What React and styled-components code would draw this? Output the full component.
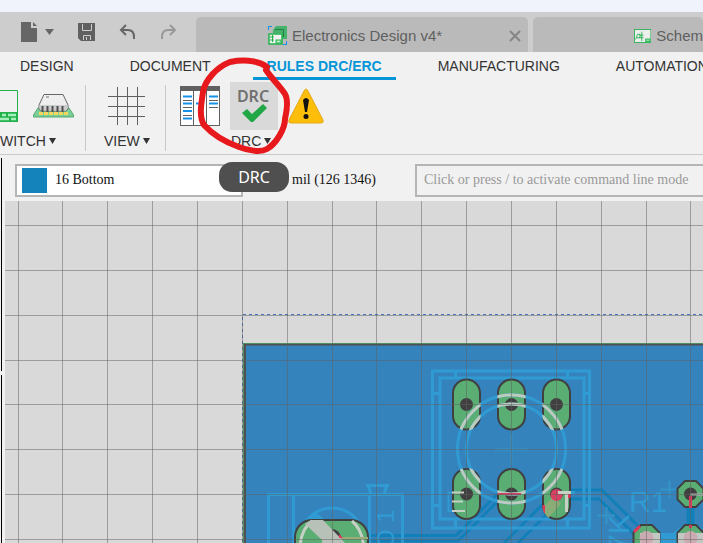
import React from "react";
import styled, { createGlobalStyle } from "styled-components";

const Global = createGlobalStyle`
  * { box-sizing: border-box; }
  body { margin: 0; overflow: hidden; background: #f1f1f1; font-family: "Liberation Sans", Arial, sans-serif; color: #333; }
  button, input, select { font: inherit; color: inherit; }
`;

const Page = styled.div`
  display: flex;
  flex-direction: column;
  height: 100vh;
  overflow: hidden;
`;

const TitleStrip = styled.div`
  flex: none;
  height: 12px;
  background: #f0f3fb;
`;

const TabBar = styled.header`
  flex: none;
  display: flex;
  align-items: flex-end;
  height: 40px;
  overflow: hidden;
  background: #cdcdcd;
`;

const QuickActions = styled.div`
  flex: none;
  display: flex;
  align-items: center;
  gap: 24px;
  width: 196px;
  height: 40px;
  padding-left: 21px;
`;

const IconButton = styled.button`
  display: flex;
  align-items: center;
  gap: 7px;
  padding: 0;
  border: 0;
  background: none;
`;

const DocTab = styled.div`
  flex: ${(p) => (p.$fill ? "1 0 0" : "none")};
  display: flex;
  align-items: center;
  width: 332px;
  min-width: 0;
  height: 35px;
  margin-right: ${(p) => (p.$fill ? 0 : 5)}px;
  padding: 2px ${(p) => (p.$fill ? 0 : 7)}px 0 ${(p) => p.$inset}px;
  border-radius: 5px 5px 0 0;
  background: #bababa;
  color: #5f5f5f;
  font-size: 15px;
  line-height: 18px;
  white-space: nowrap;
`;

const TabLabel = styled.span`
  flex: 1;
  padding-left: 5px;
`;

const Menu = styled.nav`
  flex: none;
  display: flex;
  gap: 28px;
  height: 29px;
  padding-left: 6px;
  overflow: hidden;
`;

const MenuItem = styled.a`
  flex: none;
  height: 28px;
  padding: 6px 14px 0;
  border-bottom: 3px solid ${(p) => (p.$active ? "#0696d7" : "transparent")};
  color: ${(p) => (p.$active ? "#0696d7" : "#333")};
  font-size: 14px;
  font-weight: ${(p) => (p.$active ? 700 : 400)};
  line-height: 16px;
  text-decoration: none;
`;

const Toolbar = styled.div`
  flex: none;
  display: flex;
  height: 74px;
  padding-top: 1px;
  border-bottom: 1px solid #c8c8c8;
`;

const Group = styled.section`
  position: relative;
  flex: none;
  display: flex;
  flex-direction: column;
  width: ${(p) => p.$width}px;
  height: 66px;
  margin-top: 3px;
  padding-left: ${(p) => p.$inset}px;
  border-right: ${(p) => (p.$last ? "0" : "1px solid #c8c8c8")};
`;

const Tools = styled.div`
  display: flex;
  align-items: center;
  gap: ${(p) => p.$gap}px;
  height: 48px;
  margin-top: -3px;
  padding-left: ${(p) => p.$inset || 0}px;
`;

const ToolButton = styled.button`
  flex: none;
  display: grid;
  place-items: center;
  padding: 0;
  border: 0;
  background: ${(p) => (p.$active ? "#d9d9d9" : "none")};
  height: 48px;
`;

const GroupLabel = styled.button`
  display: flex;
  align-items: center;
  gap: ${(p) => p.$gap}px;
  margin: 3px 0 0 ${(p) => p.$shift}px;
  padding: 0;
  border: 0;
  background: none;
  font-size: 14px;
  line-height: 16px;
`;

const Tooltip = styled.div`
  position: absolute;
  z-index: 3;
  top: 77px;
  left: 53px;
  width: 70px;
  border-radius: 13px;
  background: #4f4f4f;
  color: #fff;
  font-family: "Noto Sans", sans-serif;
  font-size: 16px;
  line-height: 30px;
  text-align: center;
`;

const Marker = styled.svg`
  position: absolute;
  z-index: 2;
  top: -29px;
  left: 30px;
  pointer-events: none;
`;

const Workspace = styled.main`
  flex: 1;
  display: flex;
  min-height: 0;
`;

const Rail = styled.aside`
  flex: none;
  display: flex;
  flex-direction: column;
  gap: 4px;
  width: 5px;
  padding: 3px 0 0 1px;
`;

const RailLine = styled.div`
  flex: ${(p) => (p.$fill ? "1" : "none")};
  width: 1px;
  height: 213px;
  background: #000;
`;

const Editor = styled.div`
  flex: 1;
  min-width: 0;
  display: flex;
  flex-direction: column;
`;

const CommandBar = styled.div`
  flex: none;
  display: flex;
  align-items: center;
  height: 46px;
  padding: 4px 0 0 10px;
  font-family: "Liberation Serif", serif;
  font-size: 14px;
  line-height: 16px;
  color: #111;
`;

const LayerBox = styled.label`
  flex: none;
  display: flex;
  align-items: center;
  gap: 8px;
  width: 228px;
  height: 33px;
  padding-left: 5px;
  border: 2px solid #b5b5b5;
  background: #fff;
`;

const Swatch = styled.span`
  width: 25px;
  height: 25px;
  background: #1483bb;
`;

const LayerSelect = styled.select`
  flex: 1;
  appearance: none;
  padding: 0;
  border: 0;
  background: none;
`;

const Coordinates = styled.output`
  flex: none;
  width: 172px;
  padding-left: 49px;
  white-space: nowrap;
`;

const CommandInput = styled.input`
  flex: 1;
  min-width: 0;
  height: 33px;
  padding: 0 7px;
  border: 2px solid #b5b5b5;
  border-right: 0;
  border-radius: 0;
  background: #f1f1f1;
  &::placeholder { color: #999; opacity: 1; }
`;

const Board = styled.svg`
  flex: 1;
  display: block;
  width: 100%;
  min-height: 0;
  background: #d9d9d9;
`;

const Caret = ({ color = "#333", width = 7, height = 6 }) => (
  <svg width={width} height={height} viewBox="0 0 8 6" preserveAspectRatio="none" aria-hidden="true">
    <path d="M0 0H8L4 6Z" fill={color} />
  </svg>
);

const FileIcon = () => (
  <svg width="17" height="20" viewBox="0 0 17 20">
    <path d="M0 0H10V6H16V20H0ZM12 0L16 4H12Z" fill="#666" />
  </svg>
);

const SaveIcon = () => (
  <svg width="17" height="18" viewBox="0 0 17 18">
    <path d="M0 0H17V18H3L0 15Z" fill="#606060" />
    <path d="M4.5 1V7.5H13.5V1M5.5 17V12.5H12.5V17M8.5 14V17" fill="none" stroke="#cdcdcd" />
  </svg>
);

const UndoIcon = ({ redo }) => (
  <svg width="17" height="16" viewBox="0 0 17 16">
    <g transform={redo ? "matrix(-1 0 0 1 17 0)" : undefined} fill="none" stroke={redo ? "#999" : "#666"} strokeWidth="2">
      <path d="M7 1L2 6L7 11M2 6H9Q15 6 15 13V15" />
    </g>
  </svg>
);

const CloseIcon = () => (
  <svg width="12" height="12" viewBox="0 0 12 12">
    <path d="M1 1L11 11M11 1L1 11" stroke="#858585" strokeWidth="2" />
  </svg>
);

const DesignIcon = () => (
  <svg width="19" height="19" viewBox="0 0 19 19">
    <path d="M5 4L8 0H19V13H14V7L5 7Z" fill="#45b36b" />
    <path d="M7 3.5H15.5V11" fill="none" stroke="#287e47" />
    <path d="M0 4V0H4M15 19H19V15" fill="none" stroke="#1691e8" strokeWidth="2" />
    <rect x="1" y="8" width="13" height="10" fill="#f2f2f2" stroke="#22b24c" strokeWidth="1.5" />
    <path d="M2 11H6M2 14H6M4.5 9V16" stroke="#22b24c" />
    <rect x="8" y="14" width="5" height="3" fill="#b6edc8" stroke="#22b24c" />
  </svg>
);

const SchematicIcon = () => (
  <svg width="20" height="16" viewBox="0 0 20 16">
    <rect x=".5" y=".5" width="19" height="15" fill="#eee" stroke="#22b24c" />
    <path d="M2 12L4 6H7V10H3M6 7H11M6 10H11M9 3V14" fill="none" stroke="#22b24c" />
    <rect x="13.5" y="11.5" width="5" height="3" fill="#8bdba5" stroke="#22b24c" />
  </svg>
);

const SheetIcon = () => (
  <svg width="18" height="32" viewBox="0 0 18 32">
    <path d="M0 .5H17.5V31.5H0" fill="none" stroke="#22b24c" />
    <path d="M0 22H18V32H0Z" fill="#22b24c" />
    <path d="M2 25H6M8 25H16M0 29H9M11 29H16" stroke="#a5efbd" strokeWidth="2.5" />
  </svg>
);

const ChipIcon = () => (
  <svg width="41" height="24" viewBox="0 0 41 24">
    <path d="M5 14H36L40.500 21V23H.5V21Z" fill="#79cf95" stroke="#58a971" />
    <path d="M8 18V21M13 18V21M18 18V21M23 18V21M28 18V21M33 18V21" stroke="#f8d85c" strokeWidth="4" />
    <path d="M11 .5H30L35 11V15L33 17H8L6 15V11Z" fill="#eee" stroke="#666" />
    <path d="M6.500 11H34.500V15L33 16.500H8L6.500 15Z" fill="#ccc" />
    <path d="M9.500 12V18M14.500 12V18M19.500 12V18M24.500 12V18M29.500 12V18" stroke="#505050" strokeWidth="2" />
    <path d="M13 3H16" stroke="#777" />
  </svg>
);

const GridIcon = () => (
  <svg width="38" height="38" viewBox="0 0 38 38">
    <path d="M9.500 0V38M19.500 0V38M29.500 0V38M0 9.500H37M0 19.500H37M0 29.500H37" stroke="#606060" />
  </svg>
);

const RulesIcon = () => (
  <svg width="40" height="40" viewBox="0 0 40 40">
    <rect x=".5" y=".5" width="39" height="39" fill="#fff" stroke="#606060" />
    <path d="M0 0H40V5H0ZM13 5H14V40H13ZM26 5H27V40H26Z" fill="#606060" />
    <path d="M3 10.500H12M3 17.500H12M3 25H12M3 32.500H12M16 17.500H24M29 10.500H38M29 17.500H38" stroke="#1691e8" strokeWidth="2" />
    <path d="M3 14.500H12M3 21.500H12M3 29.500H12M29 14.500H38M29 21.500H38" stroke="#606060" />
  </svg>
);

const DrcIcon = () => (
  <svg width="48" height="48" viewBox="0 0 48 48">
    <text x="23" y="20" textAnchor="middle" fontFamily="Noto Sans" fontSize="16" fontWeight="600" fill="#707070">DRC</text>
    <path d="M12 31L17 27L22 32L33 22L37 26L23 40H21Z" fill="#22a747" />
  </svg>
);

const WarningIcon = () => (
  <svg width="36" height="36" viewBox="0 0 36 36">
    <path d="M18 1Q19 1 20 3L35 32Q36 35 33 35H3Q0 35 1 32L16 3Q17 1 18 1Z" fill="#fdbd0b" stroke="#e6a817" />
    <path d="M15 12Q18 8 21 12L19 24H17Z" fill="#111" />
    <circle cx="18" cy="28.500" r="2.500" fill="#111" />
  </svg>
);

const padColumns = [466.5, 511.5, 556.5];
const padRows = [404.5, 494];
const range = (start, count) => Array.from({ length: count }, (_, i) => Math.round(start + i * 44.85) + 0.5);

const Octagon = ({ x, y, r }) => {
  const k = r * 0.42;
  return (
    <path
      d={`M${x - k} ${y - r}H${x + k}L${x + r} ${y - k}V${y + k}L${x + k} ${y + r}H${x - k}L${x - r} ${y + k}V${y - k}Z`}
      fill="#5aad73"
      stroke="#404040"
      strokeWidth="2"
    />
  );
};

const Rings = ({ color }) => (
  <g fill="none" stroke={color} strokeWidth="3">
    <circle cx="511.500" cy="449" r="54" />
    <circle cx="511.500" cy="449" r="45" />
  </g>
);

const PcbCanvas = () => (
  <Board role="img" aria-label="Board layout">
    <defs>
      <clipPath id="pads">
        {padRows.map((y) => padColumns.map((x) => <rect key={`${x}-${y}`} x={x - 14} y={y - 26} width="28" height="52" rx="14" />))}
      </clipPath>
    </defs>
    <g transform="translate(-5 -201)">
      <rect x="243" y="343" width="3000" height="3000" fill="#3483bd" />
      <path d="M3000 344.500H245V3000" fill="none" stroke="#505050" strokeWidth="2" />
      <path d="M3000 343.500H243.500V3000" fill="none" stroke="#4d8f60" />
      <path d="M3000 314.500H242.500V3000" fill="none" stroke="#4774ba" strokeDasharray="3 3" />

      <g fill="none" stroke="#1180b9" strokeWidth="3">
        <path d="M367 535.500H456L500 491.500M367 541H458L500 499M504 543L545 502M518 543L556 505" />
        <path d="M570 490H602L642 530M570 499H599L636 536" />
        <path d="M690.500 505V525" strokeWidth="8" />
      </g>

      <g fill="none" stroke="#309bd2" strokeWidth="3">
        <rect x="432.500" y="371" width="157" height="157" />
        <rect x="440" y="378" width="144" height="141" />
        <path d="M455.500 371V378M567.500 371V378M455.500 519V528M567.500 519V528M432 393.500H440M584 393.500H590M432 505.500H440M584 505.500H590" />
        <path d="M268.500 560V494.500H402.500V560M293.500 494V560M369.500 494V560M366 485.500H389M368 485L371 494M387 485L384 494" />
        <circle cx="332" cy="540" r="32" />
        <path d="M670 543A21 21 0 0 1 711 543M675 543A16 16 0 0 1 706 543" />
      </g>
      <path d="M660 538H678" stroke="#309bd2" strokeWidth="10" />
      <path d="M597 515.500H615M606.500 507V524M660 489.500H678M669.500 481V498M495 449.500H528M511.500 434V465" fill="none" stroke="#3494c6" strokeWidth="2" />

      <g fill="#309bd2" fontFamily="Liberation Sans" fontSize="30">
        <text x="629" y="512">R1</text>
        <text x="394" y="548" fontSize="24" transform="rotate(-90 394 548)">O 1</text>
        <text x="629" y="551" transform="rotate(-90 629 551)">7K</text>
      </g>

      {padRows.map((y) =>
        padColumns.map((x) => (
          <g key={`${x}-${y}`}>
            <rect x={x - 13.5} y={y - 25} width="27" height="50" rx="13.500" fill="#5aad73" stroke="#404040" strokeWidth="2" />
            <circle cx={x} cy={y} r="6.500" fill="#404040" />
          </g>
        ))
      )}
      <Rings color="#309bd2" />
      <g clipPath="url(#pads)">
        <Rings color="#bccbbd" />
        <path d="M543 516L557 500" stroke="#8aac76" strokeWidth="11" />
        <path d="M497 494H521" stroke="#d4405f" strokeWidth="2" />
        <path d="M543 505V514M570 492V498" stroke="#e23758" strokeWidth="4" />
        <circle cx="556.500" cy="495" r="6" fill="#d94162" />
      </g>
      <path d="M453 492.500H448.500V511H453" fill="none" stroke="#309bd2" strokeWidth="2" />
      <path d="M452 492.500H464M452 501.500H463M452 511H465" fill="none" stroke="#c7d0c5" strokeWidth="2" />
      <path d="M558 492.500H571M566.500 493V512" fill="none" stroke="#c7d0c5" strokeWidth="3" />
      <path d="M571 492.500H575" stroke="#309bd2" strokeWidth="3" />

      <path d="M307 521L316 512L326 521Z" fill="#309bd2" />
      <path d="M295 550V537Q295 530 300 525Q305 520 312 520H351Q358 520 363 525Q368 530 368 537V550" fill="#5aad73" stroke="#404040" strokeWidth="2" />
      <path d="M300 550Q300 530 312 521M364 550Q363 530 352 521" fill="none" stroke="#c7d0c5" strokeWidth="3" />
      <circle cx="332" cy="538" r="9" fill="#404040" />
      <path d="M340 538H368" stroke="#9cac78" strokeWidth="2" />
      <path d="M305 524L311 520H323L347 545L322 550V540Z" fill="#b7c1b8" />
      <path d="M339 534L343 538H339Z" fill="#e23758" />

      <Octagon x={690.5} y={494} r={13} />
      <Octagon x={646.5} y={538} r={13} />
      <Octagon x={690.5} y={538} r={13} />
      <circle cx="690.500" cy="494" r="6.500" fill="#404040" />
      <path d="M690 494.500H3000" stroke="#b4b8b8" strokeWidth="2" />
      <path d="M690.500 496V508M690.500 525V528M634 532L640 526" stroke="#e23758" strokeWidth="3" />
      <path d="M640 533H660V543H640ZM678 533H703V543H678Z" fill="#c4c8c5" />
      <circle cx="646.500" cy="538" r="7" fill="#cbabb2" />
      <circle cx="690.500" cy="538" r="7" fill="#cbabb2" />

      <g stroke="#606060" strokeOpacity=".5">
        {range(17.6, 60).map((x) => <path key={x} d={`M${x} 201V3000`} />)}
        {range(225, 40).map((y) => <path key={y} d={`M5 ${y}H3000`} />)}
      </g>
    </g>
  </Board>
);

export default function App() {
  return (
    <Page>
      <Global />
      <TitleStrip />
      <TabBar>
        <QuickActions>
          <IconButton aria-label="New file"><FileIcon /><Caret color="#666" width={9} /></IconButton>
          <IconButton aria-label="Save"><SaveIcon /></IconButton>
          <IconButton aria-label="Undo"><UndoIcon /></IconButton>
          <IconButton aria-label="Redo"><UndoIcon redo /></IconButton>
        </QuickActions>
        <DocTab $inset={72}>
          <DesignIcon />
          <TabLabel>Electronics Design v4*</TabLabel>
          <IconButton aria-label="Close tab"><CloseIcon /></IconButton>
        </DocTab>
        <DocTab $inset={101} $fill>
          <SchematicIcon />
          <TabLabel>Schem</TabLabel>
        </DocTab>
      </TabBar>
      <Menu>
        <MenuItem href="#design">DESIGN</MenuItem>
        <MenuItem href="#document">DOCUMENT</MenuItem>
        <MenuItem href="#rules" $active>RULES DRC/ERC</MenuItem>
        <MenuItem href="#manufacturing">MANUFACTURING</MenuItem>
        <MenuItem href="#automation">AUTOMATION</MenuItem>
      </Menu>
      <Toolbar>
        <Group $width={86} $inset={0}>
          <Tools $gap={15}>
            <ToolButton aria-label="Sheet"><SheetIcon /></ToolButton>
            <ToolButton aria-label="Board"><ChipIcon /></ToolButton>
          </Tools>
          <GroupLabel $shift={0} $gap={3}>WITCH <Caret /></GroupLabel>
        </Group>
        <Group $width={80} $inset={18}>
          <Tools $gap={0} $inset={4}>
            <ToolButton aria-label="Grid"><GridIcon /></ToolButton>
          </Tools>
          <GroupLabel $shift={0} $gap={3}>VIEW <Caret /></GroupLabel>
        </Group>
        <Group $width={170} $inset={14} $last>
          <Tools $gap={10}>
            <ToolButton aria-label="Design rules"><RulesIcon /></ToolButton>
            <ToolButton aria-label="DRC" $active><DrcIcon /></ToolButton>
            <ToolButton aria-label="Warnings"><WarningIcon /></ToolButton>
          </Tools>
          <GroupLabel $shift={51} $gap={3}>DRC <Caret /></GroupLabel>
          <Tooltip role="tooltip">DRC</Tooltip>
          <Marker width="100" height="100" viewBox="196 56 100 100" aria-hidden="true">
            <path
              d="M267 67C257 59 240 60 230 62C217 67 205 80 203 92C201 105 199 117 204 125C213 135 225 142 239 147C247 150 260 153 267 149C277 143 285 128 285 119C287 110 288 99 285 94C279 85 272 79 266 70"
              fill="none" stroke="#e8191c" strokeWidth="6" strokeLinecap="round" strokeLinejoin="round"
            />
          </Marker>
        </Group>
      </Toolbar>
      <Workspace>
        <Rail>
          <RailLine />
          <RailLine $fill />
        </Rail>
        <Editor>
          <CommandBar>
            <LayerBox>
              <Swatch />
              <LayerSelect aria-label="Layer" defaultValue="16">
                <option value="16">16 Bottom</option>
              </LayerSelect>
            </LayerBox>
            <Coordinates>mil (126 1346)</Coordinates>
            <CommandInput aria-label="Command line" placeholder="Click or press / to activate command line mode" />
          </CommandBar>
          <PcbCanvas />
        </Editor>
      </Workspace>
    </Page>
  );
}
